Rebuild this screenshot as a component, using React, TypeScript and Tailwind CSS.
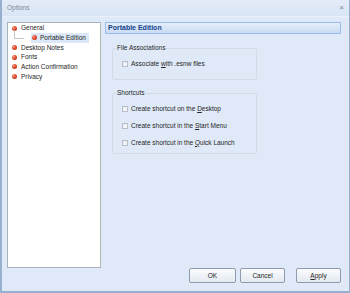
import React from 'react'

type TreeItem = {
  label: string
  child?: boolean
  selected?: boolean
}

const treeItems: TreeItem[] = [
  { label: 'General' },
  { label: 'Portable Edition', child: true, selected: true },
  { label: 'Desktop Notes' },
  { label: 'Fonts' },
  { label: 'Action Confirmation' },
  { label: 'Privacy' },
]

function Bullet() {
  return (
    <span className="inline-block w-[5px] h-[5px] rounded-full bg-[radial-gradient(circle_at_35%_35%,#f7a58a_0%,#e0482a_45%,#a8260f_100%)] shrink-0" />
  )
}

function CheckRow({ label, underline }: { label: string; underline: number }) {
  const before = label.slice(0, underline)
  const ch = label.slice(underline, underline + 1)
  const after = label.slice(underline + 1)
  return (
    <div className="flex items-center h-[17px] pl-[9px] gap-[2px]">
      <span className="w-[6px] h-[6px] border border-[#b7bec8] bg-[linear-gradient(135deg,#e4e8ee,#fbfcfd)] shrink-0" />
      <span className="ml-[1px]">
        {before}
        <span className="underline underline-offset-1 decoration-[0.5px]">{ch}</span>
        {after}
      </span>
    </div>
  )
}

function GroupBox({ title, children }: { title: string; children: React.ReactNode }) {
  return (
    <fieldset className="border border-[#d3dbe6] rounded-[2px] w-[145px] px-0">
      <legend className="ml-[3px] px-[1px] leading-[8px]">{title}</legend>
      {children}
    </fieldset>
  )
}

export default function App() {
  return (
    <div
      className="w-[350px] h-[293px] bg-[#dfe9f8] border-l-2 border-r border-b-2 border-[#98b0d0] flex flex-col text-[6.5px] text-[#262626] overflow-hidden"
      style={{ fontFamily: '"Liberation Sans", Arial, sans-serif' }}
    >
      {/* title bar */}
      <div className="h-[17px] shrink-0 flex items-center justify-between pl-[5px] pr-[5px] bg-[linear-gradient(#e3ecf8,#d9e5f5)] border-b border-[#e9f0fa]">
        <span className="text-[#7d8898]">Options</span>
        <span className="text-[#7a7f88] text-[8px] leading-none">×</span>
      </div>

      {/* body */}
      <div className="flex flex-1 pl-[5px] pr-[8px] pt-[5px] gap-[4px]">
        <div className="w-[94px] h-[246px] bg-white border border-[#a9b1bc] border-r-[#b5b5b5] shrink-0 pt-[0.5px]">
          {treeItems.map((item) => (
            <div key={item.label} className="relative h-[9.65px] flex items-center">
              {item.child ? (
                <>
                  <span className="absolute left-[6px] top-[-3px] h-[8px] border-l border-[#c6c6c6]" />
                  <span className="absolute left-[6px] top-[4.5px] w-[10px] border-t border-[#c6c6c6]" />
                  <div className="ml-[23px] h-full flex items-center gap-[3px] bg-[#dce8f7] pl-[1px] pr-[3px]">
                    <Bullet />
                    <span>{item.label}</span>
                  </div>
                </>
              ) : (
                <div className="ml-[4px] flex items-center gap-[4px]">
                  <Bullet />
                  <span>{item.label}</span>
                </div>
              )}
            </div>
          ))}
        </div>

        <div className="flex-1 flex flex-col">
          <div className="h-[12px] flex items-center pl-[2px] border border-[#99bbe8] bg-[linear-gradient(#e6effb,#c9dbf3)] text-[7px] font-bold text-[#15428b]">
            Portable Edition
          </div>

          <div className="pl-[7px] pt-[10px] flex flex-col gap-[9px]">
            <GroupBox title="File Associations">
              <div className="pt-[3px] pb-[7px]">
                <CheckRow label="Associate with .esnw files" underline={10} />
              </div>
            </GroupBox>
            <GroupBox title="Shortcuts">
              <div className="pt-[3px] pb-[2px]">
                <CheckRow label="Create shortcut on the Desktop" underline={23} />
                <CheckRow label="Create shortcut in the Start Menu" underline={23} />
                <CheckRow label="Create shortcut in the Quick Launch" underline={23} />
              </div>
            </GroupBox>
          </div>
        </div>
      </div>

      {/* buttons */}
      <div className="h-[23px] shrink-0 flex items-start justify-end pr-[8px]">
        <button className="w-[47px] h-[15px] border border-[#8e9bab] rounded-[2px] bg-[linear-gradient(#fbfcfe,#e3e9f1)] text-[6.5px] text-[#262626]">OK</button>
        <button className="ml-[4px] w-[45px] h-[15px] border border-[#8e9bab] rounded-[2px] bg-[linear-gradient(#fbfcfe,#e3e9f1)] text-[6.5px] text-[#262626]">Cancel</button>
        <button className="ml-[11px] w-[45px] h-[15px] border border-[#8e9bab] rounded-[2px] bg-[linear-gradient(#fbfcfe,#e3e9f1)] text-[6.5px] text-[#262626]">
          <span className="underline underline-offset-1">A</span>pply
        </button>
      </div>
    </div>
  )
}
